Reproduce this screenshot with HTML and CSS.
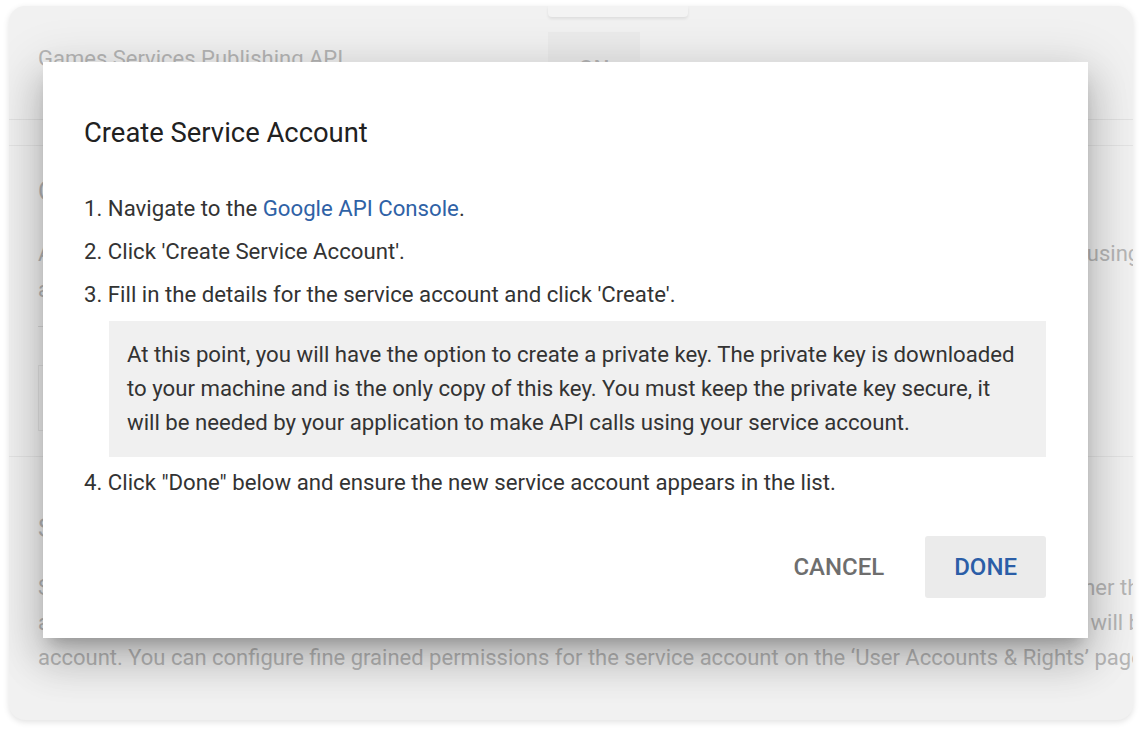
FILE: index.html
```html
<!DOCTYPE html>
<html lang="en">
<head>
  <meta charset="UTF-8" />
  <meta name="viewport" content="width=device-width, initial-scale=1.0"/>
  <title>API access - Create Service Account</title>
<link rel="stylesheet" href="styles.css">
</head>
<body>
  <div class="frame">
    <!-- page behind the dialog -->
    <div class="page">
      <div class="top-row">
        <span class="top-button"></span>
      </div>
      <div class="api-row">
        <span class="api-name">Games Services Publishing API</span>
        <span class="toggle">ON</span>
      </div>
      <div class="section-band"></div>

      <section class="section">
        <h3>OAuth Clients</h3>
        <p class="line">An OAuth client allows an app to call the Google Play Developer API on behalf of a signed-in user of the app using</p>
        <p class="line">an access token granted by that user.</p>
        <div class="rule"></div>
        <div class="client-box"></div>
      </section>
      <div class="section-band"></div>

      <section class="section section-accounts">
        <h3>Service Accounts</h3>
        <p class="line">Service accounts allow access to the Google Play Developer API on behalf of the automated application, rather than an end user.</p>
        <p class="line">access to an API from an unattended server, such as an automated build server (Jenkins). Service accounts will be granted</p>
        <p class="line">account. You can configure fine grained permissions for the service account on the ‘User Accounts &amp; Rights’ page.</p>
      </section>
    </div>

    <!-- dialog -->
    <div class="dialog">
      <h2>Create Service Account</h2>
      <ol class="steps">
        <li>Navigate to the <a href="#">Google API Console</a>.</li>
        <li>Click 'Create Service Account'.</li>
        <li class="with-note">Fill in the details for the service account and click 'Create'.
          <div class="note">At this point, you will have the option to create a private key. The private key is downloaded to your machine and is the only copy of this key. You must keep the private key secure, it will be needed by your application to make API calls using your service account.</div>
        </li>
        <li>Click "Done" below and ensure the new service account appears in the list.</li>
      </ol>
      <div class="actions">
        <button class="btn cancel">CANCEL</button>
        <button class="btn done">DONE</button>
      </div>
    </div>
  </div>
</body>
</html>
```

FILE: styles.css
```css
/* Base Layout */
* {
  box-sizing: border-box;
}

body {
  margin: 0;
  padding: 6px 8px 11px 9px;
  background-color: #fff;
  font-family: Roboto, 'Liberation Sans', sans-serif;
}

.frame {
  position: relative;
  height: 714px;
  border-radius: 16px;
  overflow: hidden;
  background-color: #f1f1f1;
  box-shadow: 0 2px 6px rgba(0, 0, 0, 0.12);
}

/* Dimmed page */
.page {
  padding-left: 29px;
  color: #b6b6b6;
  font-size: 22px;
}

.top-row {
  height: 11px;
  position: relative;
}

.top-button {
  display: block;
  margin-left: 510px;
  width: 140px;
  height: 11px;
  background-color: #f3f3f3;
  border-radius: 0 0 4px 4px;
  box-shadow: 0 2px 3px rgba(0, 0, 0, 0.08);
}

.api-row {
  display: flex;
  align-items: flex-start;
  height: 103px;
  border-bottom: 1px solid #e2e2e2;
  margin-left: -29px;
  padding-left: 29px;
}

.api-name {
  padding-top: 29px;
  width: 510px;
  white-space: nowrap;
}

.toggle {
  margin-top: 15px;
  width: 92px;
  height: 70px;
  padding-top: 24px;
  text-align: center;
  background-color: #ebebeb;
  font-weight: 500;
}

.section-band {
  height: 26px;
  margin-left: -29px;
  border-bottom: 1px solid #e4e4e4;
}

.section h3 {
  margin: 0;
  padding-top: 30px;
  font-size: 25px;
  font-weight: 400;
  line-height: 32px;
  white-space: nowrap;
}

.line {
  margin: 0;
  line-height: 36px;
  white-space: nowrap;
}

.section h3 + .line {
  margin-top: 28px;
}

.rule {
  margin-top: 18px;
  height: 1px;
  width: 400px;
  background-color: #d8d8d8;
}

.client-box {
  margin-top: 38px;
  height: 66px;
  width: 600px;
  border: 1px solid #e2e2e2;
}

.section-accounts h3 {
  padding-top: 56px;
}

.section-accounts .line {
  line-height: 35px;
}

.section-accounts h3 + .line {
  margin-top: 25px;
}

/* Dialog */
.dialog {
  position: absolute;
  left: 34px;
  top: 56px;
  width: 1045px;
  padding: 55px 42px 40px 41px;
  background-color: #fff;
  color: #333;
  box-shadow: 0 24px 38px 3px rgba(0, 0, 0, 0.16),
              0 9px 46px 8px rgba(0, 0, 0, 0.12),
              0 11px 15px -7px rgba(0, 0, 0, 0.22);
}

.dialog h2 {
  margin: 0 0 45px;
  font-size: 27.4px;
  font-weight: 400;
  line-height: 32px;
  color: #212121;
}

.steps {
  margin: 0;
  padding: 0;
  list-style-position: inside;
  font-size: 22.2px;
  line-height: 28px;
}

.steps li {
  margin-bottom: 15px;
}

.steps li:last-child {
  margin-bottom: 0;
}

.steps li.with-note {
  margin-bottom: 11px;
}

.steps a {
  color: #2f62a6;
  text-decoration: none;
}

.note {
  margin: 13px 0 0 25px;
  padding: 16px 18px 18px;
  background-color: #f0f0f0;
  line-height: 34px;
}

.actions {
  display: flex;
  justify-content: flex-end;
  gap: 12px;
  margin-top: 40px;
}

.btn {
  height: 62px;
  padding: 0 29px;
  border: none;
  border-radius: 3px;
  background: none;
  font-family: Roboto, 'Liberation Sans', sans-serif;
  font-size: 24px;
  font-weight: 500;
  cursor: pointer;
}

.cancel {
  color: #6e6e6e;
}

.done {
  background-color: #ebebeb;
  color: #2b5ea7;
}
```
